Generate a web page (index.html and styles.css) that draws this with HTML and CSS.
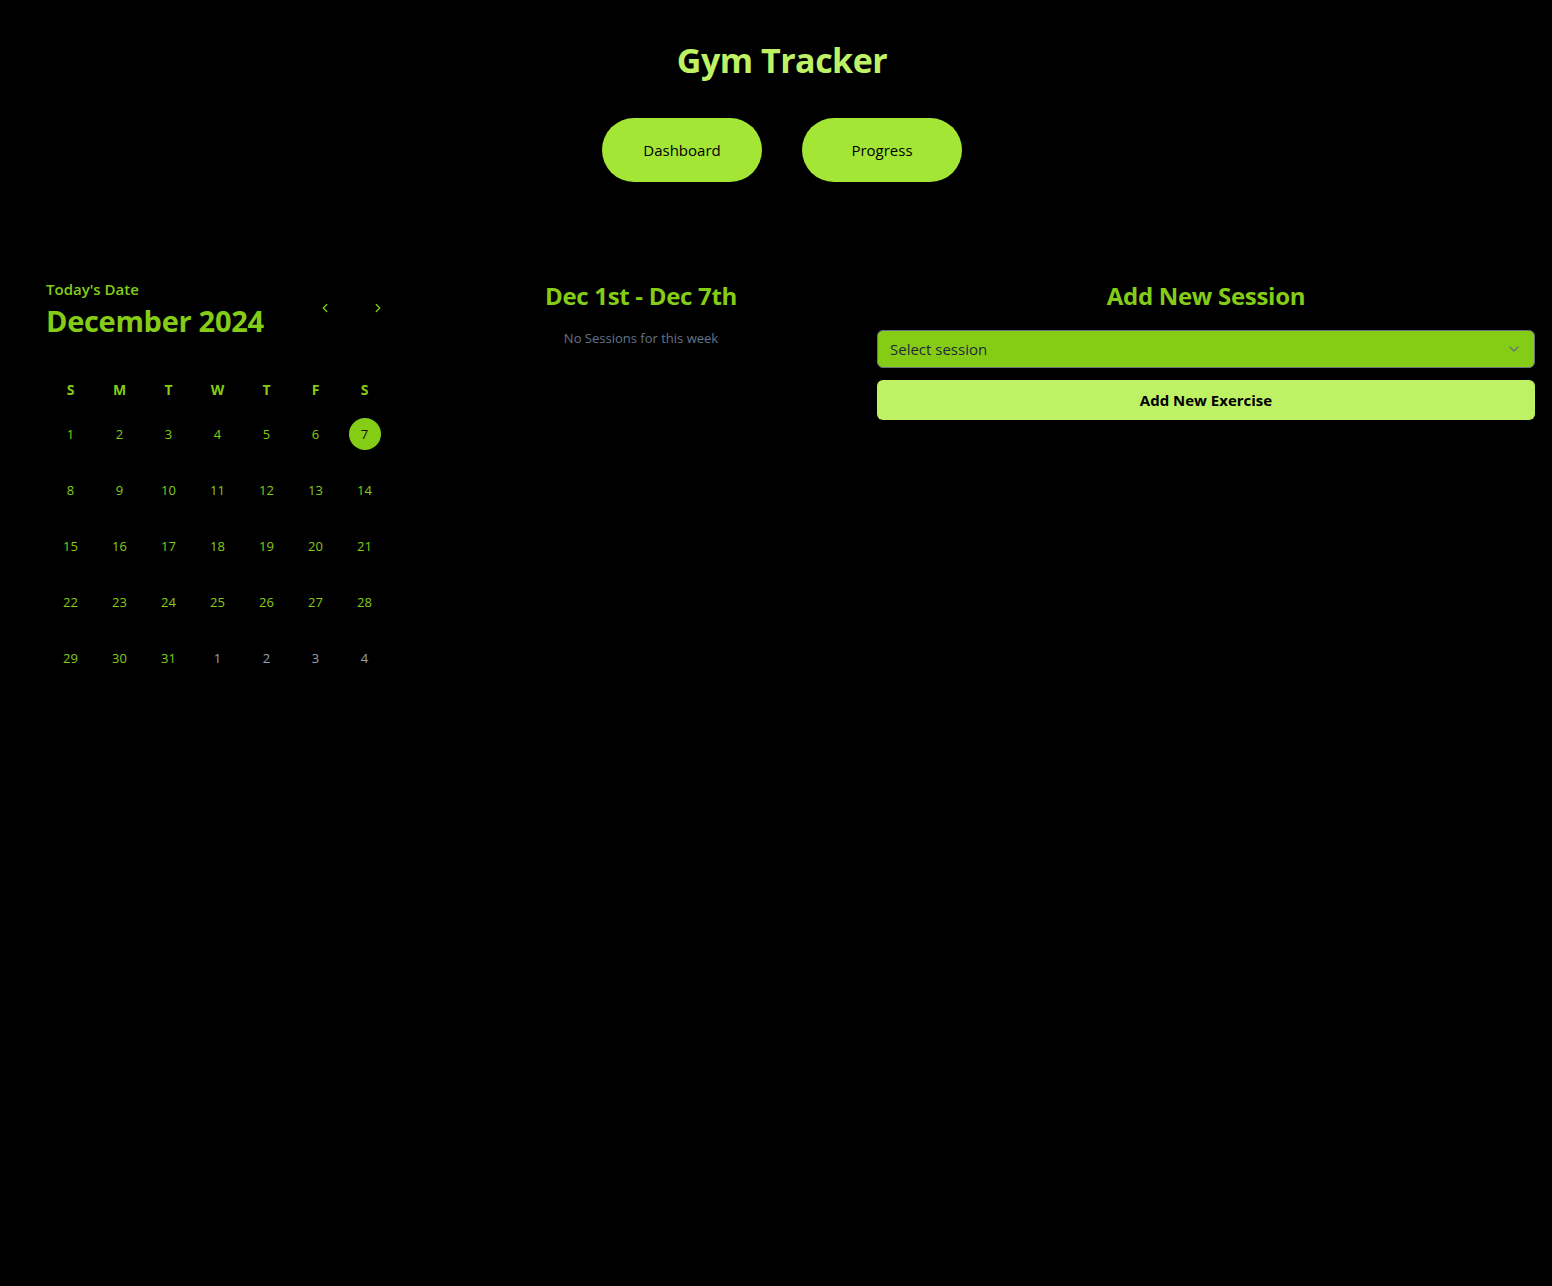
FILE: index.html
```html
<!DOCTYPE html>
<html lang="en">
<head>
    <meta charset="UTF-8">
    <title>Gym Tracker</title>
    <meta name="viewport" content="width=device-width, initial-scale=1.0">
    <link rel="stylesheet" href="styles.css">
</head>
<body>
    <header class="top">
        <h1 class="title">Gym Tracker</h1>
        <nav class="nav">
            <button class="nav-btn">Dashboard</button>
            <button class="nav-btn">Progress</button>
        </nav>
    </header>

    <main class="main">
        <section class="calendar">
            <div class="cal-head">
                <div>
                    <div class="cal-label">Today's Date</div>
                    <div class="cal-month">December 2024</div>
                </div>
                <div class="cal-arrows">
                    <button class="arrow">
                        <svg width="14" height="14" viewBox="0 0 24 24" fill="none" stroke="currentColor" stroke-width="2.2" stroke-linecap="round" stroke-linejoin="round"><path d="M15 18l-6-6 6-6"/></svg>
                    </button>
                    <button class="arrow">
                        <svg width="14" height="14" viewBox="0 0 24 24" fill="none" stroke="currentColor" stroke-width="2.2" stroke-linecap="round" stroke-linejoin="round"><path d="M9 18l6-6-6-6"/></svg>
                    </button>
                </div>
            </div>
            <div class="cal-grid">
                <div class="dow">S</div><div class="dow">M</div><div class="dow">T</div><div class="dow">W</div><div class="dow">T</div><div class="dow">F</div><div class="dow">S</div>
                <div class="day"><span>1</span></div><div class="day"><span>2</span></div><div class="day"><span>3</span></div><div class="day"><span>4</span></div><div class="day"><span>5</span></div><div class="day"><span>6</span></div><div class="day"><span class="today">7</span></div>
                <div class="day"><span>8</span></div><div class="day"><span>9</span></div><div class="day"><span>10</span></div><div class="day"><span>11</span></div><div class="day"><span>12</span></div><div class="day"><span>13</span></div><div class="day"><span>14</span></div>
                <div class="day"><span>15</span></div><div class="day"><span>16</span></div><div class="day"><span>17</span></div><div class="day"><span>18</span></div><div class="day"><span>19</span></div><div class="day"><span>20</span></div><div class="day"><span>21</span></div>
                <div class="day"><span>22</span></div><div class="day"><span>23</span></div><div class="day"><span>24</span></div><div class="day"><span>25</span></div><div class="day"><span>26</span></div><div class="day"><span>27</span></div><div class="day"><span>28</span></div>
                <div class="day"><span>29</span></div><div class="day"><span>30</span></div><div class="day"><span>31</span></div><div class="day other"><span>1</span></div><div class="day other"><span>2</span></div><div class="day other"><span>3</span></div><div class="day other"><span>4</span></div>
            </div>
        </section>

        <section class="week">
            <h2 class="heading">Dec 1st - Dec 7th</h2>
            <p class="empty">No Sessions for this week</p>
        </section>

        <section class="add">
            <h2 class="heading">Add New Session</h2>
            <div class="select">
                <span>Select session</span>
                <svg width="16" height="16" viewBox="0 0 24 24" fill="none" stroke="#6b7280" stroke-width="2" stroke-linecap="round" stroke-linejoin="round"><path d="M6 9l6 6 6-6"/></svg>
            </div>
            <button class="add-btn">Add New Exercise</button>
        </section>
    </main>
</body>
</html>
```

FILE: styles.css
```css
body {
    margin: 0;
    background-color: #000;
    color: #84cc16;
    font-family: "Open Sans", "Noto Sans", sans-serif;
}
button {
    font-family: inherit;
    border: none;
    cursor: pointer;
}
.top {
    display: flex;
    flex-direction: column;
    align-items: center;
    padding: 36px 0 0 12px;
}
.title {
    margin: 0;
    font-size: 34px;
    line-height: 48px;
    font-weight: 700;
    color: #bef264;
    letter-spacing: -0.5px;
}
.nav {
    display: flex;
    gap: 40px;
    margin-top: 34px;
}
.nav-btn {
    width: 160px;
    height: 64px;
    border-radius: 32px;
    background-color: #a3e635;
    color: #000;
    font-size: 15px;
}
.main {
    display: flex;
    align-items: flex-start;
    padding: 96px 17px 0 16px;
}
.calendar {
    width: 344px;
    padding: 0 15px 0 30px;
}
.cal-head {
    display: flex;
    justify-content: space-between;
    align-items: flex-start;
}
.cal-label {
    font-size: 15px;
    font-weight: 600;
    line-height: 20px;
    margin-top: 1px;
}
.cal-month {
    font-size: 29px;
    font-weight: 700;
    line-height: 34px;
    letter-spacing: -0.3px;
    margin-top: 5px;
}
.cal-arrows {
    display: flex;
    gap: 29px;
    margin-top: 18px;
}
.arrow {
    width: 24px;
    height: 24px;
    background: none;
    color: #84cc16;
    display: flex;
    align-items: center;
    justify-content: center;
    padding: 0;
}
.cal-grid {
    display: grid;
    grid-template-columns: repeat(7, 49px);
    margin-top: 35px;
}
.dow {
    text-align: center;
    font-size: 14px;
    font-weight: 700;
    height: 33px;
    line-height: 33px;
}
.day {
    height: 56px;
    display: flex;
    justify-content: center;
    align-items: center;
    font-size: 13px;
}
.day span {
    width: 32px;
    height: 32px;
    border-radius: 50%;
    display: flex;
    justify-content: center;
    align-items: center;
}
.day .today {
    background-color: #84cc16;
    color: #111;
}
.day.other {
    color: #94a3b8;
}
.week {
    flex: 1;
    text-align: center;
}
.heading {
    margin: 2px 0 0;
    font-size: 24px;
    font-weight: 700;
    line-height: 32px;
    letter-spacing: -0.3px;
}
.empty {
    margin: 16px 0 0;
    font-size: 13px;
    line-height: 20px;
    color: #64748b;
}
.add {
    width: 658px;
    display: flex;
    flex-direction: column;
    gap: 12px;
}
.add .heading {
    text-align: center;
    margin-bottom: 6px;
}
.select {
    height: 36px;
    border: 1px solid #6b7280;
    border-radius: 6px;
    background-color: #84cc16;
    display: flex;
    align-items: center;
    justify-content: space-between;
    padding: 0 12px 0 12px;
    font-size: 15px;
    color: #1f2937;
}
.add-btn {
    height: 40px;
    border-radius: 6px;
    background-color: #bef264;
    color: #000;
    font-size: 15px;
    font-weight: 700;
}
```
